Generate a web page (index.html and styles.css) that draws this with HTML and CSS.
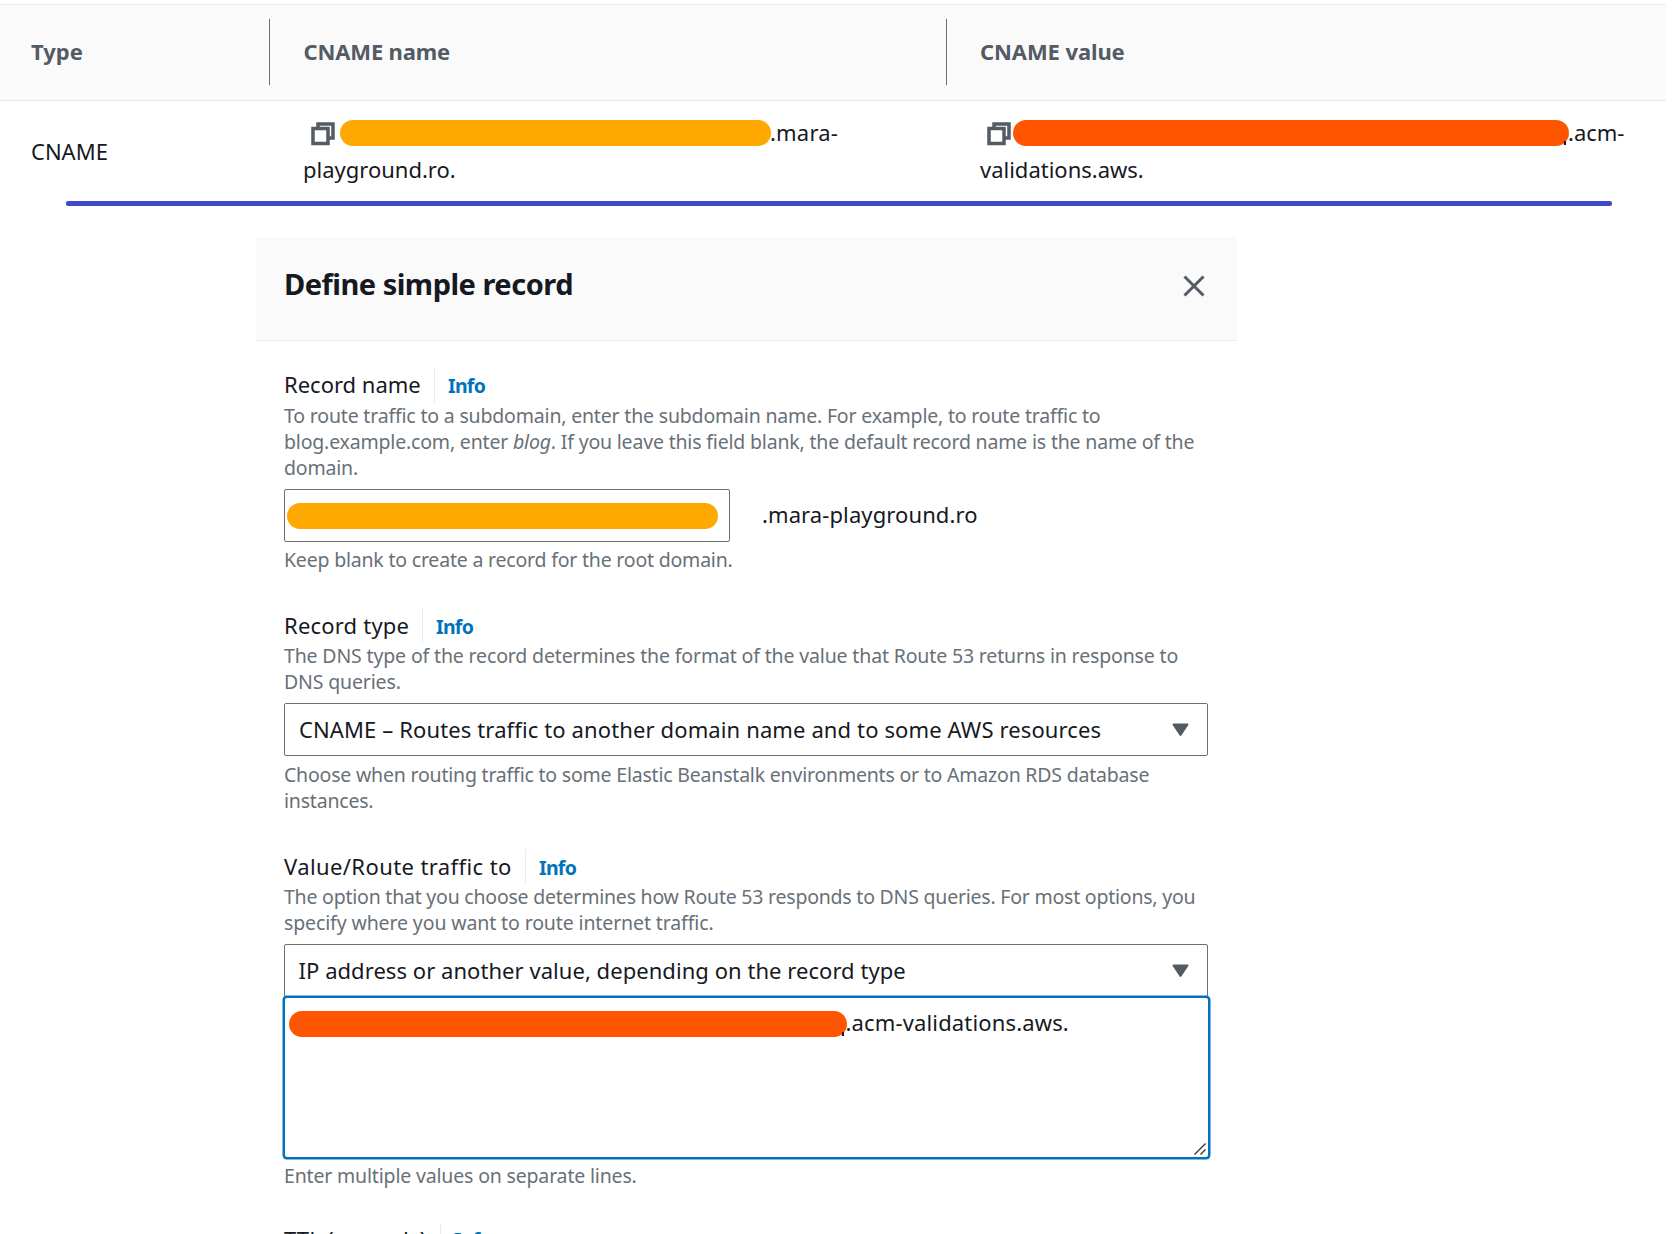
FILE: index.html
```
<!DOCTYPE html>
<html lang="en">
<head>
<meta charset="utf-8">
<title>Define simple record</title>
<link rel="stylesheet" href="styles.css">
</head>
<body>
<section class="records">
  <div class="records-head">
    <div class="th">Type</div>
    <div class="th">CNAME name</div>
    <div class="th th-last">CNAME value</div>
  </div>
  <div class="records-row">
    <div class="td td-type">CNAME</div>
    <div class="td">
      <div class="copy-line">
        <svg class="copy" viewBox="0 0 24 24"><path d="M7 5V2h15v14h-4M2 6.500h15v15H2z"/></svg>
        <span class="mask mask-name"></span><span class="tail tail-name">.mara-</span>
      </div>
      <div>playground.ro.</div>
    </div>
    <div class="td">
      <div class="copy-line">
        <svg class="copy copy-wide" viewBox="0 0 24 24"><path d="M7 5V2h15v14h-4M2 6.500h15v15H2z"/></svg>
        <span class="mask mask-value descender"></span><span class="tail">.acm-</span>
      </div>
      <div>validations.aws.</div>
    </div>
  </div>
</section>
<div class="rule"></div>
<main class="panel">
  <header class="panel-head">
    <h1>Define simple record</h1>
    <svg class="close" viewBox="0 0 22 22"><path d="M1.500 1.500l19 19M20.500 1.500l-19 19"/></svg>
  </header>
  <form class="form">
    <div class="field">
      <div class="label-row"><label class="l-name">Record name</label><a class="info">Info</a></div>
      <p class="help help-name">To route traffic to a subdomain, enter the subdomain name. For example, to route traffic to<br>blog.example.com, enter <em>blog</em>. If you leave this field blank, the default record name is the name of the<br>domain.</p>
      <div class="input-row">
        <div class="box input"><span class="mask mask-input"></span></div>
        <span class="suffix">.mara-playground.ro</span>
      </div>
      <p class="hint hint-name">Keep blank to create a record for the root domain.</p>
    </div>
    <div class="field">
      <div class="label-row"><label class="l-type">Record type</label><a class="info">Info</a></div>
      <p class="help help-type">The DNS type of the record determines the format of the value that Route 53 returns in response to<br>DNS queries.</p>
      <div class="box select"><span class="s-type">CNAME – Routes traffic to another domain name and to some AWS resources</span>
        <svg class="arrow" viewBox="0 0 17 14"><path d="M1.500 1.500h14l-7 10.500z"/></svg></div>
      <p class="hint">Choose when routing traffic to some Elastic Beanstalk environments or to Amazon RDS database<br>instances.</p>
    </div>
    <div class="field">
      <div class="label-row"><label class="l-value">Value/Route traffic to</label><a class="info">Info</a></div>
      <p class="help help-value">The option that you choose determines how Route 53 responds to DNS queries. For most options, you<br><span class="help-end">specify where you want to route internet traffic.</span></p>
      <div class="box select"><span class="s-value">IP address or another value, depending on the record type</span>
        <svg class="arrow" viewBox="0 0 17 14"><path d="M1.500 1.500h14l-7 10.500z"/></svg></div>
      <div class="area">
        <div class="area-line"><span class="mask mask-area descender"></span><span class="tail-area">.acm-validations.aws.</span></div>
        <svg class="grip" viewBox="0 0 12 12"><path d="M.5 11.500l11-11M6.500 11.500l5-5"/></svg>
      </div>
      <p class="hint">Enter multiple values on separate lines.</p>
    </div>
    <div class="field">
      <div class="label-row label-row-ttl"><label class="l-ttl">TTL (seconds)</label><a class="info">Info</a></div>
    </div>
  </form>
</main>
</body>
</html>
```
FILE: styles.css
```
* { box-sizing: border-box; }
body {
  margin: 0;
  height: 1234px;
  overflow: hidden;
  background: #fff;
  color: #16191f;
  font: 22px/37px "Noto Sans", "Open Sans", sans-serif;
  white-space: nowrap;
}
svg { display: block; flex: none; fill: none; }

/* certificate records table */
.records { width: 1666px; padding-top: 4px; }
.records-head, .records-row { display: grid; grid-template-columns: 270px 677px 1fr; }
.records-head {
  height: 97px;
  padding-top: 14px;
  background: #fafafa;
  border-top: 1px solid #eaeded;
  border-bottom: 1px solid #e3e8e8;
}
.th {
  height: 66px;
  padding-left: 33.500px;
  border-right: 1px solid #687078;
  color: #545b64;
  font-weight: 700;
  line-height: 64px;
  letter-spacing: -.15px;
}
.th:first-child { padding-left: 31px; letter-spacing: 0; }
.th-last { border-right: 0; padding-left: 33px; letter-spacing: -.1px; }
.records-row { height: 100px; padding-top: 13px; }
.td { padding-left: 33px; }
.td:last-child { padding-left: 33px; }
.td-type { padding: 19px 0 0 31px; }
.copy-line { display: flex; align-items: center; height: 37px; }
.copy { width: 24px; height: 24px; margin: 2px 5px 0 8px; stroke: #545b64; stroke-width: 3.500; }
.copy-wide { margin: 2px 2px 0 7px; }
.tail { margin-left: -1px; }
.tail-name { letter-spacing: .2px; }

/* rounded bars covering private values */
.mask { flex: none; height: 26px; margin-top: 1px; border-radius: 13px; background: #ffa800; }
.mask-name { width: 431px; }
.mask-value { width: 556px; background: #f50; }
.mask-input { width: 431px; margin-top: 2px; }
.mask-area { width: 558px; margin-top: 0; background: #f50; }
/* tip of a letter left showing under the bar */
.descender { position: relative; }
.descender::after {
  content: "";
  position: absolute;
  right: 3px;
  bottom: 1px;
  width: 2px;
  height: 4px;
  background: #16191f;
}

.rule { width: 1546px; height: 5px; margin-left: 66px; border-radius: 2px; background: #3f48cc; }

/* record panel */
.panel { width: 981px; margin: 31px 0 0 256px; }
.panel-head {
  display: flex;
  justify-content: space-between;
  height: 104px;
  padding: 28px 32px 0 28px;
  background: #fafafa;
  border-bottom: 1px solid #eaeded;
}
h1 { margin: 0; font-size: 29px; line-height: 37px; letter-spacing: -.5px; }
.close { width: 22px; height: 22px; margin-top: 10px; stroke: #545b64; stroke-width: 3; }
.form { padding: 26px 29px 0 28px; }
.field { margin-bottom: 35px; }
.label-row { display: flex; height: 35.5px; line-height: 35.5px; }
.label-row-ttl { line-height: 31px; }
.label-row label { padding-right: 13px; border-right: 1px solid #eaeded; }
.l-name { width: 151px; }
.l-type { width: 139px; letter-spacing: .2px; }
.l-value { width: 242px; letter-spacing: .4px; }
.l-ttl { width: 157px; letter-spacing: .2px; }
.info {
  padding: 1px 0 0 13px;
  color: #0073bb;
  font-size: 19.500px;
  font-weight: 700;
  letter-spacing: -.7px;
}
.label-row-ttl .info { padding-top: 0; }
.help, .hint {
  margin: 0;
  color: #687078;
  font-size: 19.500px;
  line-height: 26.200px;
  letter-spacing: -.18px;
}
.help { margin: -.5px 0 8.100px; }
.help-name { margin: 0 0 7.600px; }
.help-type { letter-spacing: -.15px; }
.help-value { letter-spacing: -.22px; }
.help-end { letter-spacing: -.12px; }
.hint { margin: 5.600px 0 -.6px; letter-spacing: -.2px; }
.hint-name { margin: 5px 0 0; }
.box {
  display: flex;
  align-items: center;
  height: 53px;
  border: 1px solid #687078;
  border-radius: 2px;
}
.input-row { display: flex; align-items: center; }
.input { width: 446px; padding-left: 2px; }
.suffix { margin: -2px 0 0 32px; letter-spacing: .1px; }
.select { justify-content: space-between; padding: 0 18px 0 14px; }
.s-type { letter-spacing: .12px; }
.s-value { margin-left: -.5px; letter-spacing: .05px; }
.arrow { width: 17px; height: 14px; fill: #545b64; stroke: #545b64; stroke-width: 2; stroke-linejoin: round; }
.area {
  position: relative;
  height: 163px;
  margin: -1.500px -2px 0 -1.500px;
  padding: 8px 0 0 4px;
  background: #fff;
  border: 2.500px solid #0073bb;
  border-radius: 4px;
  box-shadow: 0 0 0 .5px #0073bb;
}
.area-line { display: flex; align-items: center; height: 37px; }
.tail-area { margin: -4px 0 0 -1px; letter-spacing: .15px; }
.grip { position: absolute; right: 2px; bottom: 2px; width: 12px; height: 12px; stroke: #333; stroke-width: 1.300; }
.area + .hint { margin-top: 4.500px; letter-spacing: -.17px; }
```
